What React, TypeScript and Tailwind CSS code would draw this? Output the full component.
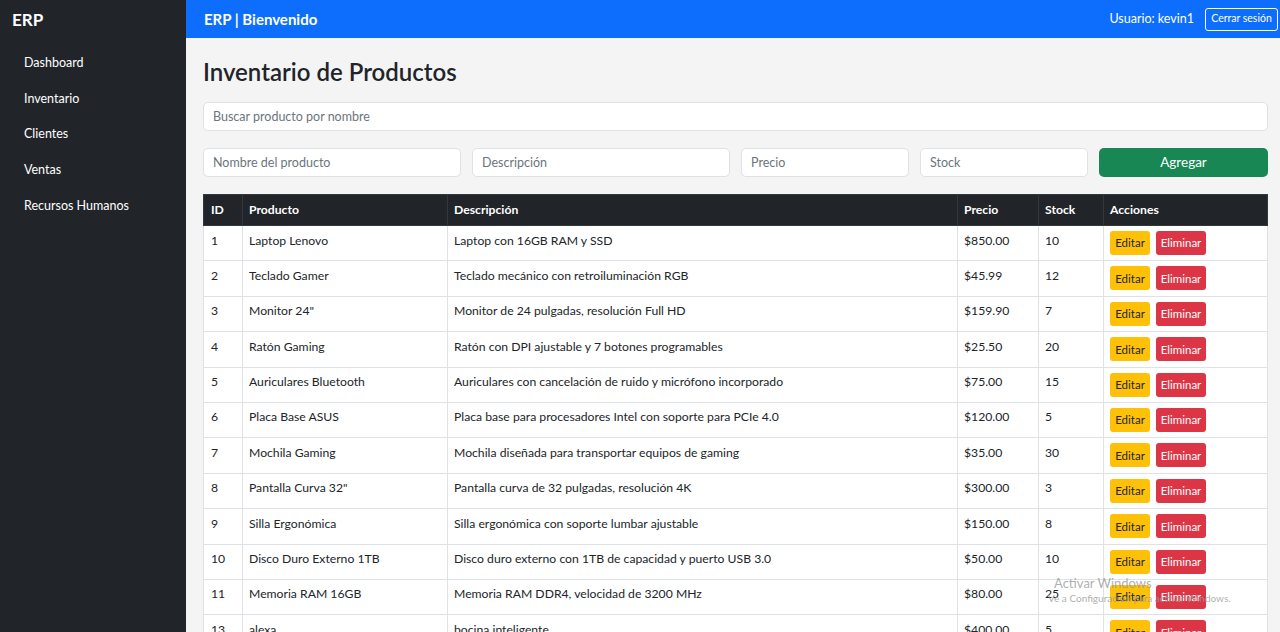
import React, { useState } from 'react';

const productos = [
  { id: 1, nombre: 'Laptop Lenovo', desc: 'Laptop con 16GB RAM y SSD', precio: 850, stock: 10 },
  { id: 2, nombre: 'Teclado Gamer', desc: 'Teclado mecánico con retroiluminación RGB', precio: 45.99, stock: 12 },
  { id: 3, nombre: 'Monitor 24"', desc: 'Monitor de 24 pulgadas, resolución Full HD', precio: 159.9, stock: 7 },
  { id: 4, nombre: 'Ratón Gaming', desc: 'Ratón con DPI ajustable y 7 botones programables', precio: 25.5, stock: 20 },
  { id: 5, nombre: 'Auriculares Bluetooth', desc: 'Auriculares con cancelación de ruido y micrófono incorporado', precio: 75, stock: 15 },
  { id: 6, nombre: 'Placa Base ASUS', desc: 'Placa base para procesadores Intel con soporte para PCIe 4.0', precio: 120, stock: 5 },
  { id: 7, nombre: 'Mochila Gaming', desc: 'Mochila diseñada para transportar equipos de gaming', precio: 35, stock: 30 },
  { id: 8, nombre: 'Pantalla Curva 32"', desc: 'Pantalla curva de 32 pulgadas, resolución 4K', precio: 300, stock: 3 },
  { id: 9, nombre: 'Silla Ergonómica', desc: 'Silla ergonómica con soporte lumbar ajustable', precio: 150, stock: 8 },
  { id: 10, nombre: 'Disco Duro Externo 1TB', desc: 'Disco duro externo con 1TB de capacidad y puerto USB 3.0', precio: 50, stock: 10 },
  { id: 11, nombre: 'Memoria RAM 16GB', desc: 'Memoria RAM DDR4, velocidad de 3200 MHz', precio: 80, stock: 25 },
  { id: 13, nombre: 'alexa', desc: 'bocina inteligente', precio: 400, stock: 5 },
];

const menu = ['Dashboard', 'Inventario', 'Clientes', 'Ventas', 'Recursos Humanos'];

const inputCls = 'h-[29px] bg-white border border-[#dee2e6] rounded-[5px] px-[9px] text-[12.5px] placeholder:text-[#6c757d] outline-none';

export default function App() {
  const [busqueda, setBusqueda] = useState('');

  const filtrados = productos.filter((p) => p.nombre.toLowerCase().includes(busqueda.toLowerCase()));

  return (
    <div className="flex h-[632px] overflow-hidden bg-[#f4f4f4] text-[#212529] font-['Lato',sans-serif] relative">
      {/* Sidebar */}
      <aside className="w-[186px] shrink-0 bg-[#212529] text-white">
        <div className="h-[40px] flex items-center pl-[12px] text-[17px] font-bold">ERP</div>
        <nav className="pt-[13px] pl-[24px] flex flex-col gap-[16.7px] text-[12.5px]">
          {menu.map((m) => (
            <a key={m} className="leading-[19px] cursor-pointer">{m}</a>
          ))}
        </nav>
      </aside>

      {/* Main */}
      <div className="flex-1 flex flex-col min-w-0">
        <header className="h-[38px] shrink-0 bg-[#0d6efd] flex items-center justify-between pl-[18px] pr-[2px] text-white">
          <span className="text-[15px] font-bold">ERP | Bienvenido</span>
          <div className="flex items-center gap-[11px]">
            <span className="text-[12.5px]">Usuario: kevin1</span>
            <button className="h-[23px] w-[73px] border border-white rounded-[3px] text-[10.5px]">Cerrar sesión</button>
          </div>
        </header>

        <main className="pl-[17px] pr-[12px] pt-[19px]">
          <h1 className="text-[24px] font-semibold leading-[29px] mb-[16px]">Inventario de Productos</h1>

          <input
            value={busqueda}
            onChange={(e) => setBusqueda(e.target.value)}
            placeholder="Buscar producto por nombre"
            className={`w-full ${inputCls}`}
          />

          <div className="flex gap-[11px] mt-[17px]">
            <input placeholder="Nombre del producto" className={`w-[258px] ${inputCls}`} />
            <input placeholder="Descripción" className={`w-[258px] ${inputCls}`} />
            <input placeholder="Precio" className={`w-[168px] ${inputCls}`} />
            <input placeholder="Stock" className={`w-[168px] ${inputCls}`} />
            <button className="flex-1 h-[29px] bg-[#198754] text-white rounded-[5px] text-[13.5px]">Agregar</button>
          </div>

          <table className="w-full mt-[17px] border-collapse text-[12.2px] bg-white">
            <thead>
              <tr className="bg-[#212529] text-white h-[31px] text-left">
                <th className="w-[39px] px-[7px] font-bold border border-[#32383e]">ID</th>
                <th className="w-[205px] px-[6px] font-bold border border-[#32383e]">Producto</th>
                <th className="w-[510px] px-[6px] font-bold border border-[#32383e]">Descripción</th>
                <th className="w-[81px] px-[6px] font-bold border border-[#32383e]">Precio</th>
                <th className="w-[65px] px-[6px] font-bold border border-[#32383e]">Stock</th>
                <th className="px-[6px] font-bold border border-[#32383e]">Acciones</th>
              </tr>
            </thead>
            <tbody>
              {filtrados.map((p) => (
                <tr key={p.id} className="h-[35.4px]">
                  <td className="px-[7px] border border-[#dee2e6] align-top pt-[5.5px]">{p.id}</td>
                  <td className="px-[6px] border border-[#dee2e6] align-top pt-[5.5px]">{p.nombre}</td>
                  <td className="px-[6px] border border-[#dee2e6] align-top pt-[5.5px]">{p.desc}</td>
                  <td className="px-[6px] border border-[#dee2e6] align-top pt-[5.5px]">${p.precio.toFixed(2)}</td>
                  <td className="px-[6px] border border-[#dee2e6] align-top pt-[5.5px]">{p.stock}</td>
                  <td className="px-[6px] border border-[#dee2e6] align-top pt-[5px]">
                    <div className="flex gap-[6px]">
                      <button className="h-[24px] w-[40px] bg-[#ffc107] text-[#212529] rounded-[3px] text-[11.5px]">Editar</button>
                      <button className="h-[24px] w-[50px] bg-[#dc3545] text-white rounded-[3px] text-[11.5px]">Eliminar</button>
                    </div>
                  </td>
                </tr>
              ))}
            </tbody>
          </table>
        </main>
      </div>

      {/* marca de agua de Windows */}
      <div className="absolute left-[1054px] top-[575px] text-[#9a9a9a]/80 pointer-events-none">
        <div className="text-[13px] leading-[17px]">Activar Windows</div>
        <div className="text-[10px] leading-[13px] -ml-[6px]">Ve a Configuración para activar Windows.</div>
      </div>
    </div>
  );
}
